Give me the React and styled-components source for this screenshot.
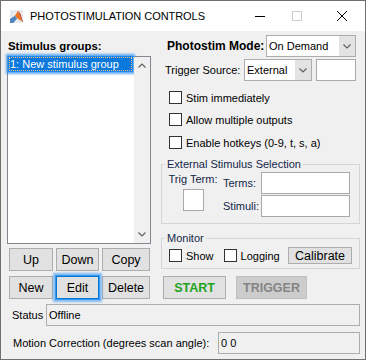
import React from 'react';
import styled, { createGlobalStyle } from 'styled-components';

const Global = createGlobalStyle`
  html, body { margin: 0; padding: 0; background: #fff; }
  body { font-family: "Liberation Sans", Arial, sans-serif; font-size: 11px; color: #000; }
  * { box-sizing: border-box; }
`;

const Window = styled.div`
  width: 366px;
  height: 360px;
  border: 1px solid #707070;
  background: #f0f0f0;
  display: flex;
  flex-direction: column;
  overflow: hidden;
`;

const TitleBar = styled.div`
  height: 30px;
  flex: none;
  background: #fff;
  display: flex;
  align-items: center;
`;

const AppIcon = styled.svg`
  flex: none;
  width: 13px;
  height: 13px;
  margin-left: 9px;
`;

const Title = styled.div`
  flex: 1;
  margin-left: 7px;
  font-size: 11px;
  letter-spacing: -0.05px;
  color: #000;
  white-space: nowrap;
`;

const WinButton = styled.div`
  flex: none;
  width: ${p => p.$w}px;
  height: 30px;
  display: flex;
  align-items: center;
  justify-content: center;
`;

const Client = styled.div`
  flex: 1;
  display: flex;
  flex-direction: column;
  padding: 0 5px 0 6px;
`;

const TopGrid = styled.div`
  display: grid;
  grid-template-columns: 144px 199px;
  column-gap: 10px;
`;

const Column = styled.div`
  display: flex;
  flex-direction: column;
`;

const GroupLabel = styled.div`
  margin-top: 8px;
  padding-left: 1px;
  font-weight: bold;
  font-size: 11.4px;
  line-height: 14px;
`;

const ListBox = styled.div`
  margin-top: 3px;
  height: 188px;
  border: 1px solid #828790;
  background: #fff;
  display: flex;
`;

const ListItems = styled.div`
  flex: 1;
`;

const ListItem = styled.div`
  margin: 0 2px 0 1px;
  height: 14px;
  line-height: 14px;
  padding-left: 1px;
  font-size: 11px;
  white-space: nowrap;
  color: ${p => (p.$selected ? '#fff' : '#000')};
  background: ${p => (p.$selected ? '#0a78dc' : 'transparent')};
  outline: ${p => (p.$selected ? '1px dotted #f2c27a' : 'none')};
  outline-offset: -1px;
  box-shadow: ${p => (p.$selected ? '0 0 0 1px #1f86ee, 0 0 2px 3px rgba(58,152,243,0.8)' : 'none')};
`;

const ScrollBar = styled.div`
  width: 16px;
  background: #f0f0f0;
  display: flex;
  flex-direction: column;
  justify-content: space-between;
`;

const ScrollArrow = styled.div`
  height: 17px;
  display: flex;
  align-items: center;
  justify-content: center;
`;

const ButtonGrid = styled.div`
  margin-top: 4px;
  padding-left: 2px;
  display: grid;
  grid-template-columns: 44px 43px 48px;
  grid-auto-rows: 23px;
  column-gap: 3px;
  row-gap: 5px;
`;

const Button = styled.button`
  position: relative;
  z-index: ${p => (p.$focused ? 1 : 0)};
  margin: 0;
  padding: 0;
  width: ${p => (p.$w ? `${p.$w}px` : 'auto')};
  height: ${p => (p.$h ? `${p.$h}px` : '100%')};
  font-family: "Liberation Sans", Arial, sans-serif;
  font-size: 12.5px;
  font-weight: ${p => (p.$bold ? 'bold' : 'normal')};
  color: ${p => (p.$disabled ? '#848484' : p.$color || '#000')};
  background: ${p => (p.$disabled ? '#cccccc' : '#e1e1e1')};
  border: 1px solid ${p => (p.$focused ? '#0078d7' : p.$disabled ? '#bfbfbf' : '#adadad')};
  box-shadow: ${p => (p.$focused ? '0 0 0 1px #3d98ef, 0 0 2px 3px rgba(66,156,242,0.65)' : 'none')};
  display: flex;
  align-items: center;
  justify-content: center;
  flex: none;
`;

const Row = styled.div`
  display: flex;
  align-items: center;
  height: ${p => p.$h || 22}px;
  margin-top: ${p => p.$mt || 0}px;
  padding-left: ${p => p.$pl || 0}px;
  gap: ${p => p.$gap || 0}px;
`;

const ModeLabel = styled.span`
  font-weight: bold;
  font-size: 12px;
  white-space: nowrap;
`;

const Text = styled.span`
  flex: none;
  width: ${p => (p.$w ? `${p.$w}px` : 'auto')};
  font-size: 11px;
  white-space: nowrap;
  color: ${p => p.$color || '#000'};
`;

const RightGroup = styled.div`
  margin-left: auto;
  margin-right: ${p => p.$mr || 0}px;
  display: flex;
  gap: 4px;
  height: 100%;
`;

const Select = styled.div`
  width: ${p => p.$w}px;
  height: 22px;
  border: 1px solid #acacac;
  background: #fff;
  display: flex;
  align-items: stretch;
`;

const SelectText = styled.div`
  flex: 1;
  padding-left: 2px;
  display: flex;
  align-items: center;
  font-size: 11px;
  white-space: nowrap;
`;

const SelectArrow = styled.div`
  width: 16px;
  background: #e3e3e3;
  display: flex;
  align-items: center;
  justify-content: center;
`;

const Field = styled.div`
  width: ${p => (p.$w ? `${p.$w}px` : 'auto')};
  flex: ${p => (p.$w ? 'none' : '1')};
  margin-left: ${p => (p.$auto ? 'auto' : '0')};
  height: ${p => p.$h || 22}px;
  border: 1px solid ${p => (p.$readonly ? '#adadad' : '#a9a9a9')};
  background: ${p => (p.$readonly ? '#f0f0f0' : '#fff')};
  padding-left: 2px;
  display: flex;
  align-items: center;
  font-size: 11px;
  white-space: pre;
`;

const CheckList = styled.div`
  margin-top: 10px;
  display: flex;
  flex-direction: column;
`;

const CheckRow = styled.div`
  display: flex;
  align-items: center;
  height: 13px;
  margin-top: ${p => p.$mt || 0}px;
  padding-left: 8px;
  gap: 4px;
`;

const Box = styled.span`
  flex: none;
  width: 13px;
  height: 13px;
  border: 1px solid #333;
  background: #fff;
  margin-left: ${p => p.$ml || 0}px;
`;

const Frame = styled.div`
  margin-top: ${p => p.$mt}px;
  height: ${p => p.$h}px;
  border: 1px solid #d5d5d5;
  display: flex;
  flex-direction: column;
`;

const Legend = styled.div`
  width: fit-content;
  margin: -7px 0 0 3px;
  padding: 0 2px;
  line-height: 12px;
  font-size: 11px;
  background: #f0f0f0;
  color: #14264a;
  white-space: nowrap;
`;

const FrameBody = styled.div`
  display: flex;
`;

const TrigCol = styled.div`
  margin-left: 6px;
  width: 50px;
  padding-top: 3px;
  display: flex;
  flex-direction: column;
  align-items: center;
  gap: 3px;
`;

const PanelText = styled.span`
  font-size: 11px;
  line-height: 13px;
  white-space: nowrap;
  color: #14264a;
`;

const TermsGrid = styled.div`
  margin-left: 5px;
  padding-top: 2px;
  display: grid;
  grid-template-columns: 38px 89px;
  grid-auto-rows: 22px;
  row-gap: 1px;
  align-items: center;
`;

const Chevron = ({ up }) => (
  <svg width="8" height="5" viewBox="0 0 8 5">
    <polyline
      points={up ? '0.5,4.5 4,1 7.5,4.5' : '0.5,0.5 4,4 7.5,0.5'}
      fill="none"
      stroke="#606060"
      strokeWidth="1.2"
    />
  </svg>
);

const SelectBox = ({ w, value }) => (
  <Select $w={w}>
    <SelectText>{value}</SelectText>
    <SelectArrow>
      <Chevron />
    </SelectArrow>
  </Select>
);

export default function App() {
  return (
    <>
      <Global />
      <Window>
        <TitleBar>
          <AppIcon viewBox="0 0 16 16">
            <rect x="0" y="0" width="16" height="16" fill="#e6e9ee" />
            <polygon points="0,11 6,7 9,10 4,16 0,16" fill="#4f86c0" />
            <polygon points="6,7 10,1 12,6 15,14 10,11 9,10" fill="#ee7424" />
            <polygon points="10,1 13,5 16,15 15,14 12,6" fill="#b9361b" />
          </AppIcon>
          <Title>PHOTOSTIMULATION CONTROLS</Title>
          <WinButton $w={32}>
            <svg width="10" height="10" viewBox="0 0 10 10">
              <line x1="0" y1="5.5" x2="10" y2="5.5" stroke="#000" strokeWidth="1" />
            </svg>
          </WinButton>
          <WinButton $w={42}>
            <svg width="10" height="10" viewBox="0 0 10 10">
              <rect x="0.5" y="0.5" width="9" height="9" fill="none" stroke="#cccccc" strokeWidth="1" />
            </svg>
          </WinButton>
          <WinButton $w={47}>
            <svg width="10" height="10" viewBox="0 0 10 10">
              <line x1="0" y1="0" x2="10" y2="10" stroke="#000" strokeWidth="1" />
              <line x1="10" y1="0" x2="0" y2="10" stroke="#000" strokeWidth="1" />
            </svg>
          </WinButton>
        </TitleBar>

        <Client>
          <TopGrid>
            <Column>
              <GroupLabel>Stimulus groups:</GroupLabel>
              <ListBox>
                <ListItems>
                  <ListItem $selected>1: New stimulus group</ListItem>
                </ListItems>
                <ScrollBar>
                  <ScrollArrow>
                    <Chevron up />
                  </ScrollArrow>
                  <ScrollArrow>
                    <Chevron />
                  </ScrollArrow>
                </ScrollBar>
              </ListBox>
              <ButtonGrid>
                <Button>Up</Button>
                <Button>Down</Button>
                <Button>Copy</Button>
                <Button>New</Button>
                <Button $focused>Edit</Button>
                <Button>Delete</Button>
              </ButtonGrid>
            </Column>

            <Column>
              <Row $mt={4} $pl={6}>
                <ModeLabel>Photostim Mode:</ModeLabel>
                <RightGroup $mr={4}>
                  <SelectBox w={90} value="On Demand" />
                </RightGroup>
              </Row>
              <Row $mt={2} $pl={4}>
                <Text>Trigger Source:</Text>
                <RightGroup $mr={4}>
                  <SelectBox w={68} value="External" />
                  <Field $w={40} />
                </RightGroup>
              </Row>

              <CheckList>
                <CheckRow>
                  <Box />
                  <Text>Stim immediately</Text>
                </CheckRow>
                <CheckRow $mt={9}>
                  <Box />
                  <Text>Allow multiple outputs</Text>
                </CheckRow>
                <CheckRow $mt={10}>
                  <Box />
                  <Text>Enable hotkeys (0-9, t, s, a)</Text>
                </CheckRow>
              </CheckList>

              <Frame $mt={15} $h={60}>
                <Legend>External Stimulus Selection</Legend>
                <FrameBody>
                  <TrigCol>
                    <PanelText>Trig Term:</PanelText>
                    <Field $w={21} />
                  </TrigCol>
                  <TermsGrid>
                    <PanelText>Terms:</PanelText>
                    <Field />
                    <PanelText>Stimuli:</PanelText>
                    <Field />
                  </TermsGrid>
                </FrameBody>
              </Frame>

              <Frame $mt={14} $h={31}>
                <Legend>Monitor</Legend>
                <Row $h={17} $mt={3} $pl={7} $gap={4}>
                  <Box />
                  <Text>Show</Text>
                  <Box $ml={6} />
                  <Text>Logging</Text>
                  <RightGroup $mr={7}>
                    <Button $w={64} $h={17}>Calibrate</Button>
                  </RightGroup>
                </Row>
              </Frame>

              <Row $h={23} $mt={7} $pl={2} $gap={10}>
                <Button $w={63} $bold $color="#1ea31e">START</Button>
                <Button $w={71} $bold $disabled>TRIGGER</Button>
              </Row>
            </Column>
          </TopGrid>

          <Row $mt={5} $pl={5}>
            <Text $w={34}>Status</Text>
            <Field $readonly>Offline</Field>
          </Row>
          <Row $mt={6} $pl={6}>
            <Text>Motion Correction (degrees scan angle):</Text>
            <Field $readonly $w={142} $auto>0 0</Field>
          </Row>
        </Client>
      </Window>
    </>
  );
}
